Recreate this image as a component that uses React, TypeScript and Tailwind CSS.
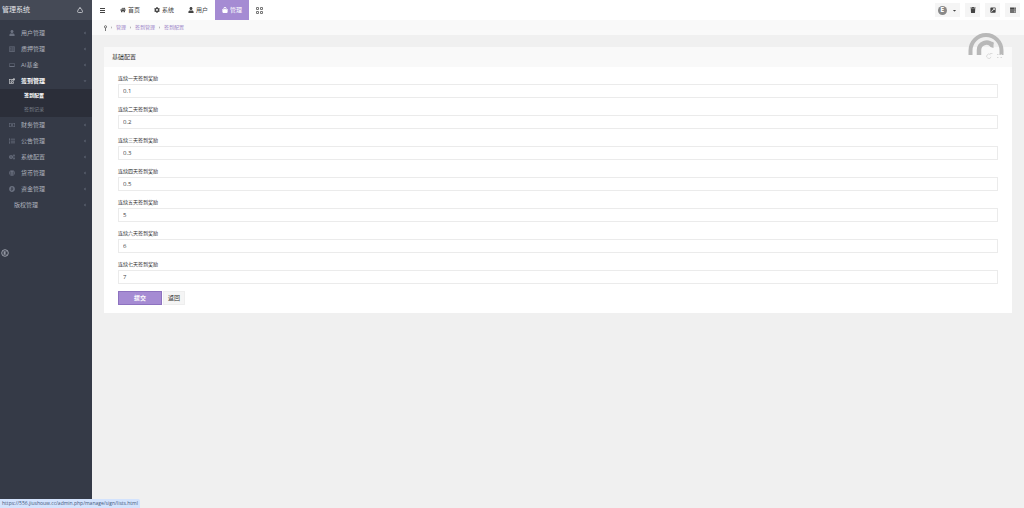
import React from "react";
import type { IconType } from "react-icons";
import {
  FaHome,
  FaCog,
  FaCogs,
  FaUser,
  FaShoppingBag,
  FaTrash,
  FaExternalLinkSquareAlt,
  FaServer,
  FaCaretDown,
  FaAngleLeft,
  FaAngleRight,
  FaAngleDown,
  FaRegEdit,
  FaRegListAlt,
  FaList,
  FaGlobe,
  FaRegMoneyBillAlt,
  FaBitcoin,
} from "react-icons/fa";
import { MdLaptop } from "react-icons/md";

interface MenuItem {
  name: string;
  icon?: IconType;
  children?: string[];
}

interface Field {
  id: string;
  label: string;
  value: string;
}

const menu: MenuItem[] = [
  { name: "用户管理", icon: FaUser },
  { name: "质押管理", icon: FaRegListAlt },
  { name: "AI基金", icon: MdLaptop },
  { name: "签到管理", icon: FaRegEdit, children: ["签到配置", "签到记录"] },
  { name: "财务管理", icon: FaRegMoneyBillAlt },
  { name: "公告管理", icon: FaList },
  { name: "系统配置", icon: FaCogs },
  { name: "货币管理", icon: FaGlobe },
  { name: "资金管理", icon: FaBitcoin },
  { name: "版权管理" },
];

const tabs: { name: string; icon: IconType; active?: boolean }[] = [
  { name: "首页", icon: FaHome },
  { name: "系统", icon: FaCog },
  { name: "用户", icon: FaUser },
  { name: "管理", icon: FaShoppingBag, active: true },
];

const fields: Field[] = [
  { id: "day1", label: "连续一天签到奖励", value: "0.1" },
  { id: "day2", label: "连续二天签到奖励", value: "0.2" },
  { id: "day3", label: "连续三天签到奖励", value: "0.3" },
  { id: "day4", label: "连续四天签到奖励", value: "0.5" },
  { id: "day5", label: "连续五天签到奖励", value: "5" },
  { id: "day6", label: "连续六天签到奖励", value: "6" },
  { id: "day7", label: "连续七天签到奖励", value: "7" },
];

const Sidebar = () => {
  return (
    <aside className="w-[92px] shrink-0 bg-[#353a47] text-[#adb1bb]">
      <div className="flex h-5 items-center justify-between bg-[#454a56] pl-[2px] pr-[9px]">
        <span className="text-[7px] text-[#e4e6ea]">管理系统</span>
        <svg viewBox="0 0 6 8" className="h-2 w-[6px]" fill="none" stroke="#d5d7dc">
          <path d="M3 1v1.500M1.500 6.500h3a1 1 0 0 0 1-1.200L4.500 3.200a1.600 1.600 0 0 0-3 0L.6 5.300a1 1 0 0 0 .9 1.200z" strokeWidth=".8" />
        </svg>
      </div>
      <nav className="pt-[5px]">
        {menu.map((e) => (
          <SidebarItem key={e.name} item={e} />
        ))}
      </nav>
      <button type="button" aria-label="收起" className="mt-9 ml-[1px] block">
        <svg viewBox="0 0 8 8" className="size-2" fill="none" stroke="#b4b8c2" strokeWidth=".8">
          <circle cx="4" cy="4" r="3.300" />
          <path d="M3.200 2v4M5.500 2.200L3.400 4l2.100 1.800" />
        </svg>
      </button>
    </aside>
  );
};

const SidebarItem = ({ item }: { item: MenuItem }) => {
  const Icon = item.icon;
  const open = !!item.children;
  return (
    <div>
      <a
        href="#"
        className={
          open
            ? "flex h-4 items-center pr-[5px] pl-2 text-[6px] font-bold text-white"
            : "flex h-4 items-center pr-[5px] pl-2 text-[6px]"
        }
      >
        {Icon && (
          <span
            className={
              open ? "flex w-[13px] pl-[1px]" : "flex w-[13px] pl-[1px] text-[#6b7180]"
            }
          >
            <Icon className="size-[6px]" />
          </span>
        )}
        <span className={Icon ? "" : "pl-[6px]"}>{item.name}</span>
        <span className="ml-auto text-[#6b7180]">
          {open ? (
            <FaAngleDown className="size-1" />
          ) : (
            <FaAngleLeft className="size-1" />
          )}
        </span>
      </a>
      {item.children && (
        <div className="bg-[#2b2e39]">
          {item.children.map((name, i) => (
            <a
              key={name}
              href="#"
              className={
                i === 0
                  ? "flex h-[14px] items-center pl-6 text-[5px] font-bold text-white"
                  : "flex h-[14px] items-center pl-6 text-[5px] text-[#7b808c]"
              }
            >
              {name}
            </a>
          ))}
        </div>
      )}
    </div>
  );
};

const Topbar = () => {
  return (
    <header className="flex h-5 items-center bg-white text-[6px] text-[#444]">
      <button type="button" aria-label="菜单" className="flex w-[21px] justify-center">
        <svg viewBox="0 0 5 5" className="size-[5px]" fill="#444">
          <path d="M0 0h5v1H0zM0 2h5v1H0zM0 4h5v1H0z" />
        </svg>
      </button>
      <nav className="flex h-full">
        {tabs.map((e) => (
          <a
            key={e.name}
            href="#"
            className={
              e.active
                ? "flex h-full items-center gap-[2px] bg-[#a58bd3] px-[7px] text-white"
                : "flex h-full items-center gap-[2px] px-[7px]"
            }
          >
            <e.icon className="size-[6px]" />
            {e.name}
          </a>
        ))}
        <a href="#" aria-label="全部" className="flex items-center px-[7px]">
          <svg viewBox="0 0 7 7" className="size-[7px]" fill="none" stroke="#777">
            <path d="M.5.5h2v2h-2zM4.500.5h2v2h-2zM.5 4.500h2v2h-2zM4.500 4.500h2v2h-2z" />
          </svg>
        </a>
      </nav>
      <div className="ml-auto flex gap-[5px] pr-1">
        <button
          type="button"
          className="flex h-[14px] w-[25px] items-center justify-around bg-[#f5f5f5]"
        >
          <span className="flex size-[9px] items-center justify-center rounded-full bg-[#888] text-[7px] font-bold text-white">
            E
          </span>
          <FaCaretDown className="size-[5px]" />
        </button>
        <ToolButton icon={FaTrash} label="清理" />
        <ToolButton icon={FaExternalLinkSquareAlt} label="打开" />
        <ToolButton icon={FaServer} label="任务" />
      </div>
    </header>
  );
};

const ToolButton = ({ icon: Icon, label }: { icon: IconType; label: string }) => {
  return (
    <button
      type="button"
      aria-label={label}
      className="flex h-[14px] w-[15px] items-center justify-center bg-[#f5f5f5]"
    >
      <Icon className="size-[6px]" />
    </button>
  );
};

const Breadcrumb = () => {
  return (
    <div className="flex h-[15px] items-center gap-[3px] bg-[#f9f9f9] pl-3 text-[5px] text-[#9d86c8]">
      <svg viewBox="0 0 3 6" className="h-[6px] w-[3px]" fill="none" stroke="#555">
        <circle cx="1.500" cy="1.800" r="1.100" strokeWidth=".8" />
        <path d="M1.500 3v3" strokeWidth=".8" />
      </svg>
      {["管理", "签到管理", "签到配置"].map((e) => (
        <React.Fragment key={e}>
          <FaAngleRight className="size-[3px] text-[#999]" />
          <a href="#">{e}</a>
        </React.Fragment>
      ))}
    </div>
  );
};

const Badge = () => {
  return (
    <svg
      viewBox="0 0 36 28"
      className="absolute -top-[15px] right-2 h-7 w-9"
      fill="none"
      stroke="#b8b8b8"
    >
      <path d="M2.500 23V18.500a15.500 15.500 0 0 1 31 0V23" strokeWidth="4" />
      <path d="M11 23v-5a7.500 7.500 0 0 1 13.200-4.800" strokeWidth="4.500" />
      <path d="M20.300 9.500l5.200.5v6l-3-1z" fill="#b8b8b8" stroke="none" />
      <path d="M22.500 22.800a2.200 2.200 0 1 0 .5 2M22 21.500h2.500" stroke="#d8d8d8" strokeWidth=".9" />
      <path d="M29 22.500h1.500M32.500 22.500h1.500M29 25.500h1.500M32.500 25.500h1.500" stroke="#d8d8d8" />
    </svg>
  );
};

const ConfigForm = () => {
  return (
    <section className="relative mx-3 mt-3 bg-white">
      <h1 className="flex h-5 items-center bg-[#f9f9f9] px-2 text-[6px] text-[#333]">
        基础配置
      </h1>
      <Badge />
      <form className="px-[14px] pt-[7px] pb-2">
        {fields.map((e) => (
          <div key={e.id} className="mb-[7px]">
            <label htmlFor={e.id} className="block h-[10px] text-[5px] leading-[8px] text-[#333]">
              {e.label}
            </label>
            <input
              id={e.id}
              defaultValue={e.value}
              className="block h-[14px] w-full border border-[#ebebeb] bg-white px-1 text-[6px] text-[#444]"
            />
          </div>
        ))}
        <div className="flex gap-[1px]">
          <button
            type="submit"
            className="h-[14px] w-11 border border-[#8d72bf] bg-[#a58bd3] text-[6px] leading-3 font-bold text-white"
          >
            提交
          </button>
          <button
            type="button"
            className="h-[14px] w-[22px] border border-[#eee] bg-[#f5f5f5] text-[6px] leading-3 text-[#333]"
          >
            返回
          </button>
        </div>
      </form>
    </section>
  );
};

const App = () => {
  return (
    <div className="flex min-h-screen bg-[#f0f0f0] font-['Open_Sans','Noto_Sans_CJK_SC',sans-serif]">
      <Sidebar />
      <main className="min-w-0 flex-1">
        <Topbar />
        <Breadcrumb />
        <ConfigForm />
      </main>
      <div className="fixed bottom-0 left-0 h-[9px] rounded-tr-xs bg-[#d3e3fd] px-[2px] text-[5px] leading-[9px] text-[#44597a]">
        https://556.jiushouw.cc/admin.php/manage/sign/lists.html
      </div>
    </div>
  );
};

export default App;
